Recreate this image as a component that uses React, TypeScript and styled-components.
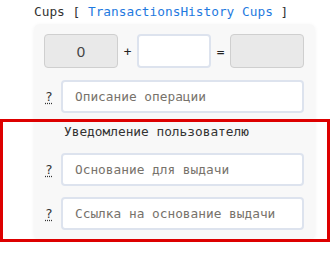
import * as React from 'react';
import styled, { createGlobalStyle } from 'styled-components';

const GlobalStyle = createGlobalStyle`
    html, body {
        margin: 0;
        padding: 0;
        background: #fff;
    }
    body {
        font-family: "DejaVu Sans Mono", "Liberation Mono", monospace;
        font-size: 12.8px;
        color: #333;
    }
`;

const Page = styled.div`
    position: relative;
    width: 333px;
    height: 254px;
    padding: 3px 0 0 34px;
    box-sizing: border-box;
`;

const Heading = styled.div`
    height: 18px;
    line-height: 18px;
    white-space: pre;
    color: #333;
`;

const Link = styled.span`
    color: #1f7ae0;
`;

const Card = styled.div`
    margin-top: 3px;
    width: 281px;
    box-sizing: border-box;
    padding: 10px 11px 9px 10px;
    background: #f8f8f8;
    border-radius: 6px;
    box-shadow: 0 1px 4px rgba(0, 0, 0, 0.06);
    display: flex;
    flex-direction: column;
`;

const SumRow = styled.div`
    display: flex;
    align-items: center;
    justify-content: space-between;
    height: 34px;
`;

const Box = styled.div<{ filled?: boolean }>`
    width: 74px;
    height: 34px;
    box-sizing: border-box;
    border-radius: 4px;
    display: flex;
    align-items: center;
    justify-content: center;
    font-family: "Liberation Sans", sans-serif;
    font-size: 15px;
    color: #444;
    background: ${(p) => (p.filled ? '#e9e9e9' : '#fff')};
    border: ${(p) => (p.filled ? '1px solid #cfcfcf' : '2px solid #dde3ee')};
`;

const Sign = styled.span`
    color: #222;
`;

const FieldRow = styled.div<{ top: number }>`
    display: flex;
    align-items: center;
    margin-top: ${(p) => p.top}px;
`;

const Hint = styled.span`
    width: 16px;
    margin-left: 1px;
    color: #333;
    text-decoration: underline dotted;
    text-underline-offset: 2px;
`;

const Input = styled.div`
    flex: 1;
    height: 33px;
    box-sizing: border-box;
    border: 2px solid #dde3ee;
    border-radius: 4px;
    background: #fff;
    padding-left: 12px;
    display: flex;
    align-items: center;
    color: #77726b;
`;

const Section = styled.div`
    margin-top: 9px;
    padding-left: 20px;
    height: 20px;
    line-height: 20px;
    color: #333;
`;

const Marker = styled.div`
    position: absolute;
    left: 0;
    top: 119px;
    width: 330px;
    height: 123px;
    box-sizing: border-box;
    border: 3px solid #dd0000;
    pointer-events: none;
`;

const Field = ({ text, top }: { text: string; top: number }) => (
    <FieldRow top={top}>
        <Hint>?</Hint>
        <Input>{text}</Input>
    </FieldRow>
);

export default function App() {
    return (
        <Page>
            <GlobalStyle />
            <Heading>
                Cups [ <Link>TransactionsHistory Cups</Link> ]
            </Heading>
            <Card>
                <SumRow>
                    <Box filled>0</Box>
                    <Sign>+</Sign>
                    <Box />
                    <Sign>=</Sign>
                    <Box filled />
                </SumRow>
                <Field text="Описание операции" top={12} />
                <Section>Уведомление пользователю</Section>
                <Field text="Основание для выдачи" top={11} />
                <Field text="Ссылка на основание выдачи" top={11} />
            </Card>
            <Marker />
        </Page>
    );
}
